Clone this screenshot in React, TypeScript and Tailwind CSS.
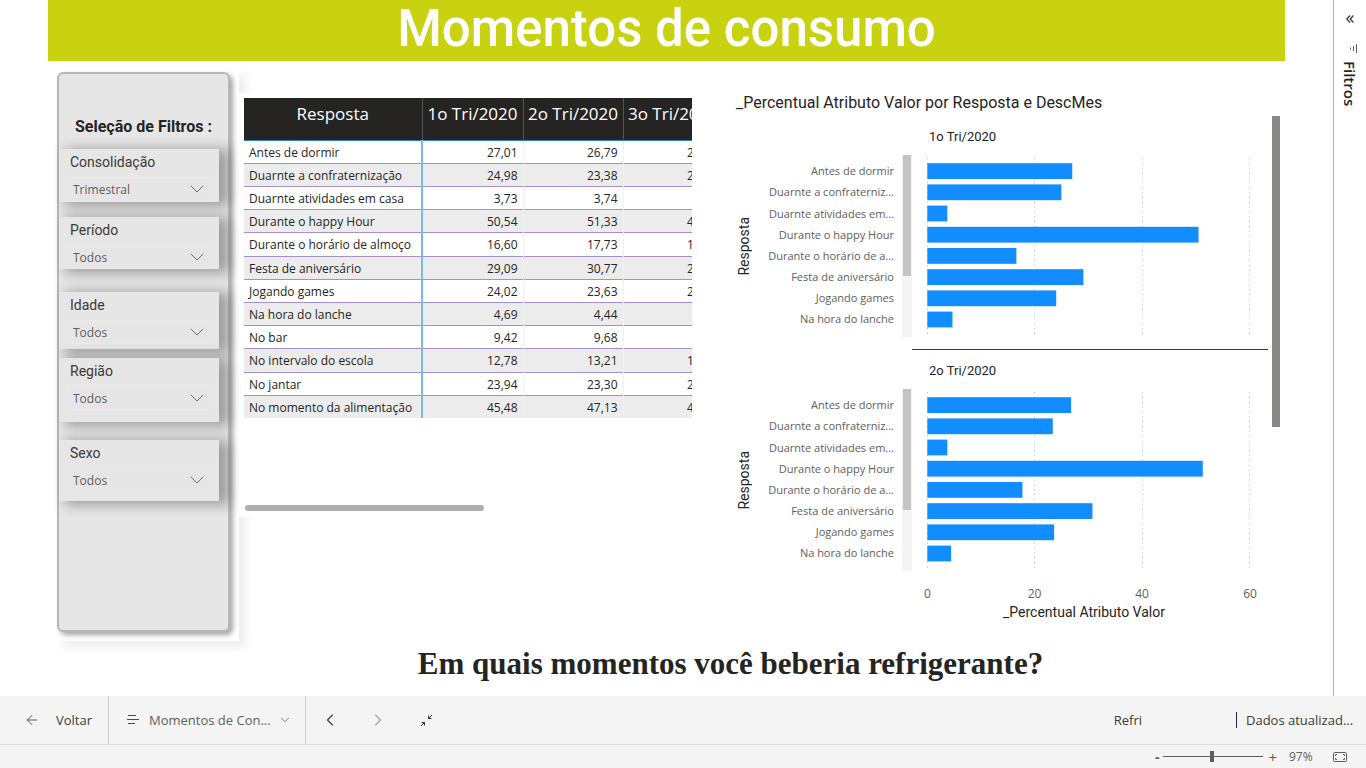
import React from "react";
import { ArrowLeft, ChevronDown, ChevronLeft, ChevronRight } from "lucide-react";

type Row = { label: string; short: string; values: [string, string, string] };

const ROWS: Row[] = [
  { label: "Antes de dormir", short: "Antes de dormir", values: ["27,01", "26,79", "26,42"] },
  { label: "Duarnte a confraternização", short: "Duarnte a confraterniz...", values: ["24,98", "23,38", "23,91"] },
  { label: "Duarnte atividades em casa", short: "Duarnte atividades em...", values: ["3,73", "3,74", "3,80"] },
  { label: "Durante o happy Hour", short: "Durante o happy Hour", values: ["50,54", "51,33", "49,87"] },
  { label: "Durante o horário de almoço", short: "Durante o horário de a...", values: ["16,60", "17,73", "17,05"] },
  { label: "Festa de aniversário", short: "Festa de aniversário", values: ["29,09", "30,77", "29,64"] },
  { label: "Jogando games", short: "Jogando games", values: ["24,02", "23,63", "23,18"] },
  { label: "Na hora do lanche", short: "Na hora do lanche", values: ["4,69", "4,44", "4,51"] },
  { label: "No bar", short: "No bar", values: ["9,42", "9,68", "9,33"] },
  { label: "No intervalo do escola", short: "No intervalo do escola", values: ["12,78", "13,21", "12,96"] },
  { label: "No jantar", short: "No jantar", values: ["23,94", "23,30", "23,75"] },
  { label: "No momento da alimentação", short: "No momento da alimentação", values: ["45,48", "47,13", "46,20"] },
];

const PERIODS = ["1o Tri/2020", "2o Tri/2020", "3o Tri/2020"];

const SLICERS = [
  { id: "consolidacao", title: "Consolidação", value: "Trimestral", box: "mt-3 h-[53px]" },
  { id: "periodo", title: "Período", value: "Todos", box: "mt-[15px] h-[52px]" },
  { id: "idade", title: "Idade", value: "Todos", box: "mt-[23px] h-[57px]" },
  { id: "regiao", title: "Região", value: "Todos", box: "mt-[9px] h-16" },
  { id: "sexo", title: "Sexo", value: "Todos", box: "mt-[18px] h-[61px]" },
];

const DIN = "font-['Roboto',sans-serif]";

function Slicer({ id, title, value, box }: (typeof SLICERS)[number]) {
  return (
    <div className={`w-40 shrink-0 bg-[#e6e6e6] pr-2 pl-2 shadow-[8px_2px_12px_2px_rgba(0,0,0,0.32)] ${box}`}>
      <label htmlFor={id} className={`block h-7 pl-[3px] text-[14px] leading-[26px] text-[#3a3938] ${DIN}`}>
        {title}
      </label>
      <div className="grid h-6 grid-cols-[1fr_20px] items-center border border-[#eaeaea]">
        <select
          id={id}
          className="col-span-2 col-start-1 row-start-1 h-full w-full appearance-none bg-transparent pt-0.5 pl-[5px] text-[12px] text-[#605e5c] outline-none"
        >
          <option>{value}</option>
        </select>
        <svg viewBox="0 0 14 8" className="pointer-events-none col-start-2 row-start-1 h-2 w-[14px]" fill="none" stroke="#6c6b78">
          <path d="M.8.8 7 7 13.2.8" />
        </svg>
      </div>
    </div>
  );
}

function DataTable() {
  return (
    <div className="w-[448px] overflow-hidden">
      <table className="h-80 w-[479px] table-fixed border-collapse text-[#252423]">
        <colgroup>
          <col className="w-[178px]" />
          <col className="w-[101px]" />
          <col className="w-[100px]" />
          <col className="w-[100px]" />
        </colgroup>
        <thead>
          <tr className="h-[42px] bg-[#252423] text-[17px] leading-6 text-white">
            <th scope="col" className="border-r border-[#555] pt-1 text-center align-top font-normal">Resposta</th>
            {PERIODS.map((p) => (
              <th key={p} scope="col" className="border-r border-[#555] pt-1 text-center align-top font-normal whitespace-nowrap">
                {p}
              </th>
            ))}
          </tr>
        </thead>
        <tbody className="border-t border-[#2f7fc4]">
          {ROWS.map((r) => (
            <tr key={r.label} className="border-b border-[#a48fd2] text-[12px] leading-5 last:border-b-0 even:bg-[#ececec]">
              <th scope="row" className="border-r-2 border-r-[#7db7ec] pt-0.5 pb-0 pl-[5px] text-left font-normal whitespace-nowrap">
                {r.label}
              </th>
              {r.values.map((v, i) => (
                <td key={i} className="border-r border-r-[#f2f2f2] pt-0.5 pr-[5px] pb-0 text-right">{v}</td>
              ))}
            </tr>
          ))}
        </tbody>
      </table>
    </div>
  );
}

function Facet({ index }: { index: 0 | 1 }) {
  const shown = ROWS.slice(0, 8);
  return (
    <section className="flex h-[234px]">
      <div className="flex w-4 items-center justify-center pt-[26px]">
        <span className={`rotate-180 text-[14px] leading-4 [writing-mode:vertical-rl] ${DIN}`}>Resposta</span>
      </div>
      <ul className="mt-[45px] grid h-[169px] w-[142px] grid-rows-8 text-right text-[11px] text-[#605e5c]">
        {shown.map((r) => (
          <li key={r.label} className="flex items-center justify-end whitespace-nowrap">{r.short}</li>
        ))}
      </ul>
      <div className="mt-[39px] ml-2 h-[182px] w-[10px] bg-[#f4f4f4] px-px">
        <div className="h-[121px] bg-[#c4c4c4]" />
      </div>
      <div className={`flex-1 pl-[15px] ${index === 0 ? "border-b border-[#3b3a39]" : ""}`}>
        <h3 className={`h-[39px] pl-0.5 text-[13px] leading-[42px] ${DIN}`}>{PERIODS[index]}</h3>
        <svg viewBox="0 0 341 182" preserveAspectRatio="none" className="block h-[182px] w-full">
          {[0, 107, 215, 322].map((x) => (
            <line key={x} x1={x + 0.5} x2={x + 0.5} y1="3" y2="182" stroke="#b8b8b8" strokeDasharray="1 3.86" />
          ))}
          {shown.map((r, i) => (
            <rect
              key={r.label}
              x="0.3"
              y={8.2 + i * 21.2}
              width={parseFloat(r.values[index].replace(",", ".")) * 5.367}
              height="15.8"
              fill="#118dff"
            />
          ))}
        </svg>
      </div>
    </section>
  );
}

function Chart() {
  return (
    <section className="mt-[29px] ml-11 flex-1 pr-[5px] text-[#252423]">
      <h2 className={`h-[26px] text-[16px] leading-[26px] ${DIN}`}>_Percentual Atributo Valor por Resposta e DescMes</h2>
      <div className="flex">
        <div className="flex-1">
          <Facet index={0} />
          <Facet index={1} />
          <div className="ml-[181px] grid grid-cols-[21px_86px_21px_86px_22px_86px_22px] pt-px text-center text-[12px] leading-[18px] text-[#605e5c]">
            <span>0</span>
            <span />
            <span>20</span>
            <span />
            <span>40</span>
            <span />
            <span>60</span>
          </div>
          <p className={`ml-[164px] text-center text-[14px] leading-[18px] ${DIN}`}>_Percentual Atributo Valor</p>
        </div>
        <div className="ml-1 h-[311px] w-2 bg-[#8a8886]" />
      </div>
    </section>
  );
}

function FilterRail() {
  return (
    <aside className="flex w-[33px] flex-col items-center border-l border-[#b3b0ad] bg-white text-[#252423]">
      <button aria-label="Expandir filtros" className="mt-[14px] h-[10px]">
        <svg viewBox="0 0 8 8" className="h-2 w-2" fill="none" stroke="#3b3a39" strokeWidth="1.3">
          <path d="M4 .5.8 4 4 7.5M7.4.5 4.2 4l3.2 3.5" />
        </svg>
      </button>
      <svg viewBox="0 0 9 9" className="mt-5 ml-[6px] h-[9px] w-[9px]" fill="none" stroke="#605e5c">
        <path d="M1.5 3.5v2M4.5 2v5M7.5 0v9" />
      </svg>
      <span className="mt-2 text-[15px] leading-5 font-semibold [writing-mode:vertical-rl]">Filtros</span>
    </aside>
  );
}

function Footer() {
  return (
    <footer className="bg-[#f4f4f4] text-[#3b3a39]">
      <div className="flex h-[49px] border-b border-[#dcdcdc] text-[13px]">
        <button className="flex w-[109px] items-center gap-4 border-r border-[#cccccc] pl-6">
          <ArrowLeft size={16} strokeWidth={1.2} />
          <span className="pt-0.5">Voltar</span>
        </button>
        <button className="flex w-[197px] items-center border-r border-[#cccccc] pl-[18px] text-[#605e5c]">
          <svg viewBox="0 0 12 10" className="mr-[10px] h-[10px] w-3" fill="none" stroke="#4a4948">
            <path d="M1 .5h8M0 4.5h12M1 8.5h7" />
          </svg>
          <span className="pt-0.5">Momentos de Con...</span>
          <ChevronDown size={14} strokeWidth={1.4} className="ml-[7px]" />
        </button>
        <button aria-label="Página anterior" className="flex w-12 items-center justify-center">
          <ChevronLeft size={20} strokeWidth={1.4} />
        </button>
        <button aria-label="Próxima página" className="flex w-12 items-center justify-center text-[#a6a6a6]">
          <ChevronRight size={20} strokeWidth={1.4} />
        </button>
        <button aria-label="Reduzir" className="flex w-12 items-center justify-center">
          <svg viewBox="0 0 13 13" className="h-[13px] w-[13px]" fill="none" stroke="#323130">
            <path d="M12 1 8.5 4.5M8.5 1.5v3h3M1 12l3.5-3.5M1.5 8.5h3v3" />
          </svg>
        </button>
        <span className="ml-auto flex items-center pt-0.5">Refri</span>
        <span className="ml-[94px] flex items-center">
          <span className="mr-[9px] h-4 border-l border-[#28247a]" />
        </span>
        <span className="flex w-[120px] items-center pt-0.5 whitespace-nowrap">Dados atualizad...</span>
      </div>
      <div className="flex h-[23px] items-center justify-end pr-[19px] text-[12px] text-[#605e5c]">
        <button aria-label="Diminuir zoom" className="mr-1 text-[14px] leading-4 font-bold">-</button>
        <input
          type="range"
          aria-label="Zoom"
          min={0}
          max={100}
          defaultValue={49}
          className="h-3 w-[100px] appearance-none bg-[linear-gradient(#605e5c,#605e5c)] bg-[length:100%_1px] bg-center bg-no-repeat [&::-webkit-slider-thumb]:h-[11px] [&::-webkit-slider-thumb]:w-1 [&::-webkit-slider-thumb]:appearance-none [&::-webkit-slider-thumb]:bg-[#605e5c]"
        />
        <button aria-label="Aumentar zoom" className="ml-[5px] text-[15px] leading-4">+</button>
        <span className="ml-3 w-6">97%</span>
        <button aria-label="Ajustar à página" className="ml-5">
          <svg viewBox="0 0 14 10" className="h-[10px] w-[14px]" fill="none" stroke="#605e5c">
            <rect x=".5" y=".5" width="13" height="9" rx="1" />
            <path d="M2.5 4V2.5H4M10 2.5h1.5V4M11.5 6v1.5H10M4 7.5H2.5V6" />
          </svg>
        </button>
      </div>
    </footer>
  );
}

export default function App() {
  return (
    <div className="flex min-h-screen flex-col bg-white font-['Open_Sans','Noto_Sans',sans-serif]">
      <div className="flex flex-1">
        <main className="mr-12 ml-12 flex-1">
          <h1 className={`h-[61px] bg-[#c8d210] text-center text-[51px] leading-[57px] font-medium text-white ${DIN}`}>
            Momentos de consumo
          </h1>
          <div className="flex h-[580px]">
            <aside className="w-[191px] bg-white pt-[11px] pl-[9px] shadow-[10px_10px_10px_-4px_rgba(0,0,0,0.08)]">
              <div className="h-[560px] w-[173px] rounded-md border-2 border-[#b8b8b8] bg-[#e6e6e6] pt-[43px] shadow-[3px_3px_5px_rgba(0,0,0,0.35)]">
                <h2 className={`h-5 pl-4 text-[16px] leading-5 font-bold whitespace-nowrap text-[#252423] ${DIN}`}>
                  Seleção de Filtros :
                </h2>
                {SLICERS.map((s) => (
                  <Slicer key={s.id} {...s} />
                ))}
              </div>
            </aside>
            <section className="relative mt-8 h-[424px] bg-white pt-[5px] pl-[5px]">
              <DataTable />
              <div className="mt-[87px] ml-px h-[6px] w-[239px] rounded-full bg-[#b0aead]" />
            </section>
            <Chart />
          </div>
          <p className="pl-32 text-center font-['Liberation_Serif',serif] text-[31px] leading-[46px] font-bold text-[#252423]">
            Em quais momentos você beberia refrigerante?
          </p>
        </main>
        <FilterRail />
      </div>
      <Footer />
    </div>
  );
}
